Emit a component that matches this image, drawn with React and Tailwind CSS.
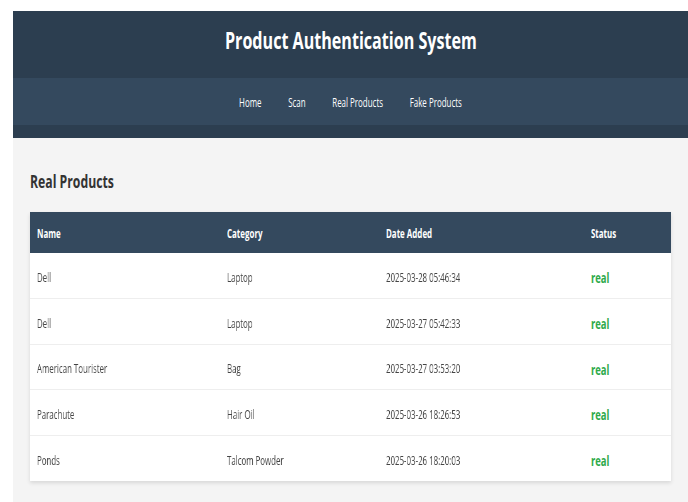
import React from 'react';

const products = [
  { name: 'Dell', category: 'Laptop', added: '2025-03-28 05:46:34', status: 'real' },
  { name: 'Dell', category: 'Laptop', added: '2025-03-27 05:42:33', status: 'real' },
  { name: 'American Tourister', category: 'Bag', added: '2025-03-27 03:53:20', status: 'real' },
  { name: 'Parachute', category: 'Hair Oil', added: '2025-03-26 18:26:53', status: 'real' },
  { name: 'Ponds', category: 'Talcom Powder', added: '2025-03-26 18:20:03', status: 'real' },
];

const navLinks = ['Home', 'Scan', 'Real Products', 'Fake Products'];

// narrow type: the UI font is drawn condensed
const Narrow = ({ children, className = 'scale-x-[0.63]' }) => (
  <span className={`inline-block origin-left whitespace-nowrap antialiased ${className}`}>{children}</span>
);

const App = () => {
  return (
    <div
      className="min-h-screen bg-white pl-[13px] pt-[11px] antialiased"
      style={{ fontFamily: '"Open Sans", "Noto Sans", sans-serif' }}
    >
      <header className="bg-[#2c3e50] pb-[13px]">
        <div className="flex h-[67px] items-center justify-center pb-[8px]">
          <h1 className="inline-block scale-x-[0.70] whitespace-nowrap text-[23px] font-bold leading-none text-white">
            Product Authentication System
          </h1>
        </div>
        <nav className="flex h-[47px] items-center justify-center bg-[#34495e] pt-[4px]">
          <div className="flex scale-x-[0.635] gap-[42px] whitespace-nowrap">
            {navLinks.map(link => (
              <a key={link} href="#" className="text-[12.5px] leading-none text-white">
                {link}
              </a>
            ))}
          </div>
        </nav>
      </header>

      <main className="min-h-[364px] bg-[#f4f4f4] px-[17px] pt-[31px] pb-[20px]">
        <h2 className="mb-[19px] text-[18px] font-bold leading-[24px] text-[#333]">
          <Narrow className="scale-x-[0.68]">Real Products</Narrow>
        </h2>

        <table className="w-full border-collapse bg-white text-left shadow-[0_2px_4px_rgba(0,0,0,0.12)]">
          <thead>
            <tr className="h-[41px] bg-[#34495e] text-[11.5px] font-bold text-white">
              <th className="w-[190px] pl-[7px] pt-[3px]"><Narrow className="scale-x-[0.69]">Name</Narrow></th>
              <th className="w-[159px] pl-[7px] pt-[3px]"><Narrow className="scale-x-[0.69]">Category</Narrow></th>
              <th className="w-[205px] pl-[7px] pt-[3px]"><Narrow className="scale-x-[0.69]">Date Added</Narrow></th>
              <th className="pl-[7px] pt-[3px]"><Narrow className="scale-x-[0.69]">Status</Narrow></th>
            </tr>
          </thead>
          <tbody>
            {products.map((p, i) => (
              <tr key={i} className="h-[45.6px] border-b border-[#eee] text-[12.5px] text-[#444] last:border-b-0">
                <td className="pl-[7px] pt-[5px]"><Narrow className="scale-x-[0.63] will-change-transform">{p.name}</Narrow></td>
                <td className="pl-[7px] pt-[5px]"><Narrow className="scale-x-[0.63] will-change-transform">{p.category}</Narrow></td>
                <td className="pl-[7px] pt-[5px]"><Narrow className="scale-x-[0.63] will-change-transform">{p.added}</Narrow></td>
                <td className="pl-[7px] pt-[4px] text-[15px] font-bold text-[#2eaa4a]"><Narrow>{p.status}</Narrow></td>
              </tr>
            ))}
          </tbody>
        </table>
      </main>
    </div>
  );
};

export default App;
